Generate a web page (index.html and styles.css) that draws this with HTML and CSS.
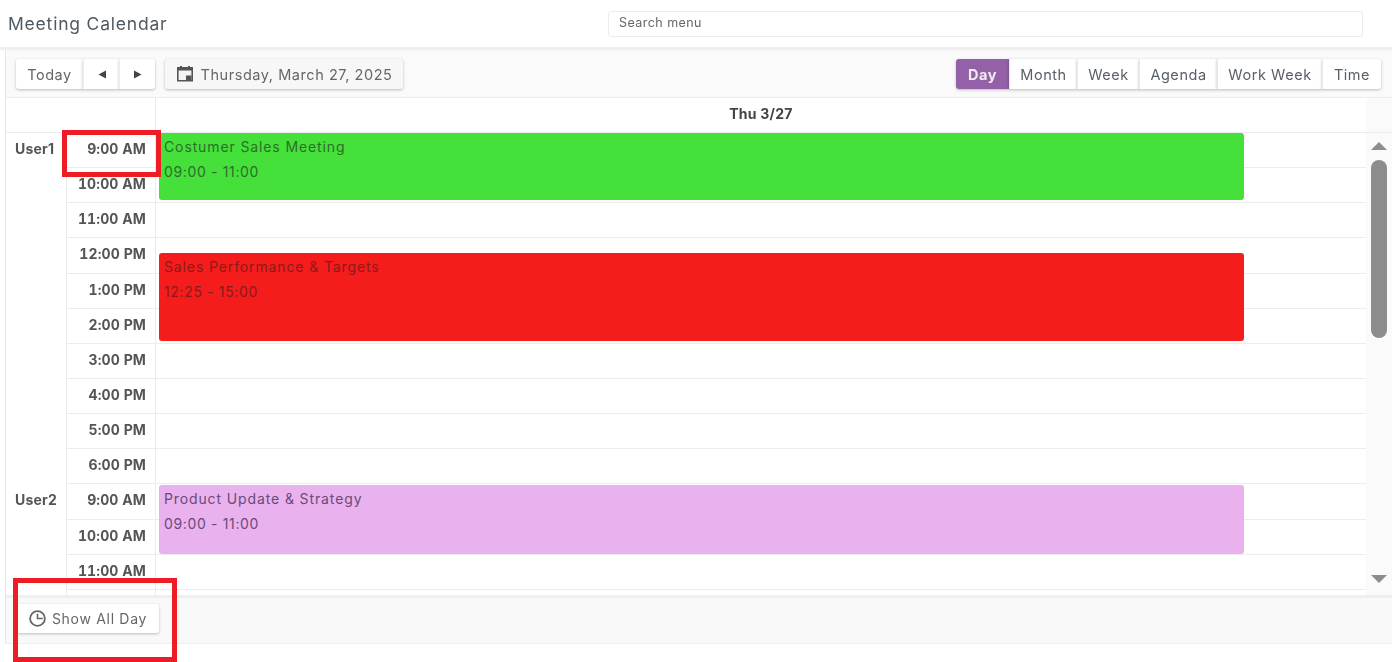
FILE: index.html
```html
<!DOCTYPE html>
<html lang="en">
<head>
<meta charset="utf-8">
<title>Meeting Calendar</title>
<link rel="stylesheet" href="styles.css">
</head>
<body>
<div class="app">
  <header class="topbar">
    <h1 class="title">Meeting Calendar</h1>
    <div class="search">Search menu</div>
  </header>
  <section class="scheduler">
    <div class="toolbar">
      <div class="btn-group">
        <button class="btn btn-today">Today</button>
        <button class="btn btn-nav"><svg width="10" height="9" viewBox="0 0 10 9"><path d="M9 0.5V8.5L1.5 4.5Z" fill="#444"/></svg></button>
        <button class="btn btn-nav"><svg width="10" height="9" viewBox="0 0 10 9"><path d="M1 0.5V8.5L8.5 4.5Z" fill="#444"/></svg></button>
      </div>
      <button class="btn btn-date">
        <svg class="cal-icon" width="18" height="16" viewBox="0 0 18 16"><path d="M1 1H4V0H6V1H12V0H14V1H17V15.5H1Z" fill="#555"/><rect x="2.6" y="4.5" width="12.8" height="9.5" fill="#f4f4f4"/><rect x="10" y="9.5" width="5.4" height="4.5" fill="#555"/></svg>
        Thursday, March 27, 2025
      </button>
      <div class="views">
        <button class="btn view active">Day</button>
        <button class="btn view view-month">Month</button>
        <button class="btn view view-week">Week</button>
        <button class="btn view view-agenda">Agenda</button>
        <button class="btn view view-work">Work Week</button>
        <button class="btn view view-time">Time</button>
      </div>
    </div>
    <div class="head-row">
      <div class="head-corner"></div>
      <div class="head-day">Thu 3/27</div>
      <div class="head-gutter"></div>
    </div>
    <div class="content">
      <div class="rows">
        <div class="group">
          <div class="user">User1</div>
          <div class="slots">
            <div class="slot"><span class="time">9:00 AM</span><span class="cell"></span></div>
            <div class="slot"><span class="time">10:00 AM</span><span class="cell"></span></div>
            <div class="slot"><span class="time">11:00 AM</span><span class="cell"></span></div>
            <div class="slot"><span class="time">12:00 PM</span><span class="cell"></span></div>
            <div class="slot"><span class="time">1:00 PM</span><span class="cell"></span></div>
            <div class="slot"><span class="time">2:00 PM</span><span class="cell"></span></div>
            <div class="slot"><span class="time">3:00 PM</span><span class="cell"></span></div>
            <div class="slot"><span class="time">4:00 PM</span><span class="cell"></span></div>
            <div class="slot"><span class="time">5:00 PM</span><span class="cell"></span></div>
            <div class="slot"><span class="time">6:00 PM</span><span class="cell"></span></div>
          </div>
        </div>
        <div class="group">
          <div class="user">User2</div>
          <div class="slots">
            <div class="slot"><span class="time">9:00 AM</span><span class="cell"></span></div>
            <div class="slot"><span class="time">10:00 AM</span><span class="cell"></span></div>
            <div class="slot"><span class="time">11:00 AM</span><span class="cell"></span></div>
            <div class="slot slot-tail"><span class="time"></span><span class="cell"></span></div>
          </div>
        </div>
        <div class="event ev-green"><div class="ev-title">Costumer Sales Meeting</div><div>09:00 - 11:00</div></div>
        <div class="event ev-red"><div class="ev-title">Sales Performance &amp; Targets</div><div>12:25 - 15:00</div></div>
        <div class="event ev-purple"><div class="ev-title">Product Update &amp; Strategy</div><div>09:00 - 11:00</div></div>
      </div>
      <div class="scrollbar">
        <span class="arrow arrow-up"></span>
        <span class="thumb"></span>
        <span class="arrow arrow-down"></span>
      </div>
    </div>
    <div class="footer">
      <button class="btn btn-allday">
        <svg width="19" height="17" viewBox="0 0 18 16"><circle cx="9" cy="8" r="7" fill="none" stroke="#666" stroke-width="1.7"/><path d="M9 3.5V8H14" stroke="#666" stroke-width="1.5" fill="none"/></svg>
        Show All Day
      </button>
    </div>
  </section>
  <div class="mark mark-time"></div>
  <div class="mark mark-allday"></div>
</div>
</body>
</html>
```
FILE: styles.css
```css
* { box-sizing: border-box; }
html, body { margin: 0; height: 100%; background: #fff; overflow: hidden; }
body { font-family: Inter, Roboto, "Liberation Sans", sans-serif; color: #555; }
.app { position: relative; width: 1392px; height: 662px; overflow: hidden; filter: blur(0.6px); }

.topbar { height: 50px; display: flex; align-items: center; padding: 0 29px 0 8px; border-bottom: 3px solid #efefef; }
.title { flex: 0 0 600px; margin: 0; font-size: 17.5px; font-weight: 400; letter-spacing: 0.8px; color: #4e5a63; }
.search { flex: 1; height: 26px; padding: 3px 10px; border: 1px solid #ededed; border-radius: 3px; font-size: 12.5px; letter-spacing: 0.45px; color: #666; }

.scheduler { margin-left: 5px; height: 594px; border-left: 1px solid #e6e6e6; }
.toolbar { height: 48px; display: flex; align-items: center; padding: 1px 11px 0 10px; background: #fafafa; border-bottom: 1px solid #ececec; }
.btn { height: 30px; display: inline-flex; align-items: center; justify-content: center; padding: 0; border: 0; background: #fff; font: inherit; font-size: 14.5px; letter-spacing: 0.55px; color: #666; box-shadow: 0 1px 3px rgba(0,0,0,.25); }
.btn-group { display: flex; }
.btn-today { width: 67px; border-radius: 3px 0 0 3px; }
.btn-nav { width: 36px; border-left: 1px solid #ededed; }
.btn-nav:last-child { border-radius: 0 3px 3px 0; }
.btn-date { width: 238px; margin-left: 10px; gap: 7px; background: #f7f7f7; border-radius: 3px; }
.cal-icon { flex: none; }
.views { margin-left: auto; display: flex; }
.view { color: #5a6068; border-left: 1px solid #e8e8e8; }
.active { width: 53px; background: #9460a8; color: #eee; font-weight: 700; border-left: 0; border-radius: 3px 0 0 3px; }
.view-month { width: 68px; }
.view-week { width: 62px; }
.view-agenda { width: 78px; }
.view-work { width: 105px; }
.view-time { width: 59px; border-radius: 0 3px 3px 0; }

.head-row { height: 35px; display: flex; border-bottom: 1px solid #ececec; }
.head-corner { width: 150px; border-right: 1px solid #ececec; }
.head-day { flex: 1; display: flex; align-items: center; justify-content: center; padding-bottom: 3px; font-size: 14px; font-weight: 700; letter-spacing: 0.25px; color: #444; }
.head-gutter { width: 26px; background: #fafafa; }

.content { height: 462px; display: flex; }
.rows { position: relative; flex: 1; overflow: hidden; }
.group { display: flex; }
.user { width: 61px; padding: 7px 0 0 9px; font-size: 14px; font-weight: 700; letter-spacing: 0.2px; color: #555; border-right: 1px solid #ececec; }
.slots { flex: 1; }
.slot { height: 35.15px; display: flex; border-bottom: 1px solid #ececec; }
.slot-tail { height: 6px; border-bottom: 0; }
.time { width: 89px; padding: 7px 9px 0 0; text-align: right; font-size: 14px; font-weight: 700; font-variant-numeric: tabular-nums; letter-spacing: 0.1px; color: #555; border-right: 1px solid #ececec; white-space: nowrap; }
.cell { flex: 1; }

.event { position: absolute; left: 153px; width: 1085px; padding: 5px 5px; border-radius: 3px; font-size: 14px; letter-spacing: 0.65px; line-height: 18px; }
.ev-title { margin-bottom: 7px; letter-spacing: 0.88px; }
.ev-green { top: 0; height: 67px; background: #45e03a; color: #2d6e2a; }
.ev-red { top: 120px; height: 88px; background: #f51c1c; color: #8c1a1a; }
.ev-purple { top: 352px; height: 69px; background: #e9b2ee; color: #6b4a78; }

.scrollbar { position: relative; width: 26px; background: #fafafa; }
.thumb { position: absolute; left: 5px; top: 27px; width: 16px; height: 178px; border-radius: 8px; background: #8c8c8c; }
.arrow { position: absolute; left: 5px; width: 0; height: 0; border-left: 8px solid transparent; border-right: 8px solid transparent; }
.arrow-up { top: 9px; border-bottom: 8px solid #8c8c8c; }
.arrow-down { top: 442px; border-top: 8px solid #8c8c8c; }

.footer { height: 49px; display: flex; align-items: center; padding: 0 0 4px 10px; background: #f9f9f9; border-top: 3px solid #efefef; border-bottom: 1px solid #efefef; }
.btn-allday { width: 143px; height: 29px; gap: 5px; border-radius: 3px; font-size: 14px; letter-spacing: 0.7px; }

.mark { position: absolute; border: 5px solid #ee1c25; }
.mark-time { left: 62px; top: 130px; width: 99px; height: 47px; }
.mark-allday { left: 13px; top: 578px; width: 164px; height: 84px; }
```
